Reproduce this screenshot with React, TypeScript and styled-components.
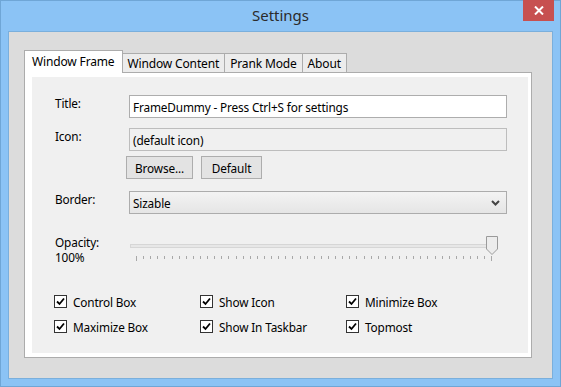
import React from "react";
import styled, { createGlobalStyle } from "styled-components";

const GlobalStyle = createGlobalStyle`
  html, body {
    margin: 0;
    padding: 0;
    background: #8bc3f5;
  }
  body {
    font-family: "Segoe UI", "Noto Sans", "Open Sans", sans-serif;
    font-size: 11.5px;
    letter-spacing: -0.15px;
    color: #000;
  }
`;

const Window = styled.div`
  width: 561px;
  height: 387px;
  box-sizing: border-box;
  background: #8bc3f5;
  border: 1px solid #6fa6d6;
  display: flex;
  flex-direction: column;
`;

const TitleBar = styled.div`
  position: relative;
  height: 30px;
  display: flex;
  align-items: center;
  justify-content: center;
`;

const Caption = styled.div`
  font-size: 15px;
  letter-spacing: 0;
  color: #2b2b2b;
  margin-top: -2px;
`;

const CloseButton = styled.div`
  position: absolute;
  top: -1px;
  right: 6px;
  width: 31px;
  height: 21px;
  background: #c75050;
  display: flex;
  align-items: center;
  justify-content: center;
`;

const Client = styled.div`
  flex: 1;
  margin: 0 7px 7px;
  background: #dcdcdc;
  border: 1px solid #7aafdc;
  padding: 18px 20px 20px 15px;
  display: flex;
  flex-direction: column;
`;

const TabStrip = styled.div`
  display: flex;
  align-items: flex-end;
  height: 23px;
  position: relative;
  z-index: 1;
  margin-bottom: -1px;
`;

const Tab = styled.div<{ $active?: boolean }>`
  box-sizing: border-box;
  height: ${(p) => (p.$active ? "23px" : "20px")};
  padding: ${(p) => (p.$active ? "0 7px 2px" : "0 5px")};
  margin-left: ${(p) => (p.$active ? "0" : "-1px")};
  background: ${(p) => (p.$active ? "#ffffff" : "#ececec")};
  border: 1px solid #acacac;
  border-bottom: ${(p) => (p.$active ? "none" : "1px solid #acacac")};
  display: flex;
  align-items: center;
  white-space: nowrap;
  font-size: 12px;
`;

const Panel = styled.div`
  flex: 1;
  background: #ffffff;
  border: 1px solid #acacac;
  padding: 4px 3px 4px 7px;
  display: flex;
`;

const Page = styled.div`
  flex: 1;
  background: #f0f0f0;
  padding: 18px 21px 0 23px;
  display: flex;
  flex-direction: column;
`;

const Row = styled.div<{ $top: number }>`
  display: flex;
  margin-top: ${(p) => p.$top}px;
`;

const Label = styled.div`
  width: 74px;
  flex-shrink: 0;
  line-height: 15px;
  padding-top: 1px;
  font-size: 11.8px;
`;

const TextBox = styled.div<{ $disabled?: boolean }>`
  flex: 1;
  box-sizing: border-box;
  height: 23px;
  background: ${(p) => (p.$disabled ? "#f0f0f0" : "#ffffff")};
  border: 1px solid ${(p) => (p.$disabled ? "#bdbdbd" : "#adadad")};
  padding: 0 3px;
  display: flex;
  align-items: center;
  font-size: 11.8px;
`;

const ButtonRow = styled.div`
  display: flex;
  gap: 8px;
  margin-left: 71px;
  margin-top: 5px;
`;

const Button = styled.div<{ $w: number }>`
  box-sizing: border-box;
  width: ${(p) => p.$w}px;
  height: 23px;
  background: #e3e3e3;
  border: 1px solid #adadad;
  display: flex;
  align-items: center;
  justify-content: center;
  font-size: 11.8px;
`;

const Combo = styled.div`
  flex: 1;
  box-sizing: border-box;
  height: 23px;
  background: linear-gradient(#f3f3f3, #e5e5e5);
  border: 1px solid #acacac;
  padding: 0 6px 0 3px;
  display: flex;
  align-items: center;
  justify-content: space-between;
  font-size: 11.8px;
`;

const SliderBox = styled.div`
  flex: 1;
  display: flex;
  flex-direction: column;
  padding: 2px 10px 0 1px;
`;

const TrackArea = styled.div`
  position: relative;
  height: 20px;
  display: flex;
  align-items: center;
`;

const Track = styled.div`
  flex: 1;
  height: 4px;
  box-sizing: border-box;
  background: #e7e7e7;
  border: 1px solid #d6d6d6;
`;

const Thumb = styled.svg`
  position: absolute;
  right: -1px;
  top: 0;
`;

const Ticks = styled.div`
  display: flex;
  justify-content: space-between;
  align-items: flex-start;
  padding: 0 4px 0 6px;
  height: 6px;
`;

const Tick = styled.div<{ $long?: boolean }>`
  width: 1px;
  height: ${(p) => (p.$long ? "5px" : "3px")};
  background: #a8a8a8;
`;

const Checks = styled.div`
  display: grid;
  grid-template-columns: repeat(3, 146px);
  row-gap: 10px;
  margin-top: 29px;
  margin-left: -1px;
`;

const Check = styled.div`
  display: flex;
  align-items: center;
  gap: 6px;
  height: 15px;
  font-size: 11.8px;
`;

const Box = styled.div`
  width: 13px;
  height: 13px;
  box-sizing: border-box;
  border: 1px solid #333;
  background: #fff;
  display: flex;
  align-items: center;
  justify-content: center;
`;

const CheckBox = ({ label }: { label: string }) => (
  <Check>
    <Box>
      <svg width="9" height="9" viewBox="0 0 9 9">
        <path d="M1 4.5 L3.5 7 L8 1.5" fill="none" stroke="#000" strokeWidth="1.8" />
      </svg>
    </Box>
    {label}
  </Check>
);

const tabs = ["Window Frame", "Window Content", "Prank Mode", "About"];
const checks = [
  "Control Box",
  "Show Icon",
  "Minimize Box",
  "Maximize Box",
  "Show In Taskbar",
  "Topmost",
];

export default function App() {
  const ticks = Array.from({ length: 51 }, (_, i) => i);
  return (
    <>
      <GlobalStyle />
      <Window>
        <TitleBar>
          <Caption>Settings</Caption>
          <CloseButton>
            <svg width="10" height="9" viewBox="0 0 10 9">
              <path d="M1 0.5 L9 8.5 M9 0.5 L1 8.5" stroke="#fff" strokeWidth="2" />
            </svg>
          </CloseButton>
        </TitleBar>
        <Client>
          <TabStrip>
            {tabs.map((t, i) => (
              <Tab key={t} $active={i === 0}>
                {t}
              </Tab>
            ))}
          </TabStrip>
          <Panel>
            <Page>
              <Row $top={0}>
                <Label>Title:</Label>
                <TextBox>FrameDummy - Press Ctrl+S for settings</TextBox>
              </Row>
              <Row $top={10}>
                <Label>Icon:</Label>
                <TextBox $disabled>(default icon)</TextBox>
              </Row>
              <ButtonRow>
                <Button $w={67}>Browse...</Button>
                <Button $w={61}>Default</Button>
              </ButtonRow>
              <Row $top={12}>
                <Label>Border:</Label>
                <Combo>
                  Sizable
                  <svg width="9" height="6" viewBox="0 0 9 6">
                    <path d="M1 1 L4.5 4.5 L8 1" fill="none" stroke="#444" strokeWidth="2" />
                  </svg>
                </Combo>
              </Row>
              <Row $top={20}>
                <Label>
                  Opacity:
                  <br />
                  100%
                </Label>
                <SliderBox>
                  <TrackArea>
                    <Track />
                    <Thumb width="12" height="19" viewBox="0 0 12 19">
                      <path
                        d="M0.5 0.5 H11.5 V13 L6 18.5 L0.5 13 Z"
                        fill="#ececec"
                        stroke="#9a9a9a"
                      />
                    </Thumb>
                  </TrackArea>
                  <Ticks>
                    {ticks.map((i) => (
                      <Tick key={i} $long={i === 0 || i === 50} />
                    ))}
                  </Ticks>
                </SliderBox>
              </Row>
              <Checks>
                {checks.map((c) => (
                  <CheckBox key={c} label={c} />
                ))}
              </Checks>
            </Page>
          </Panel>
        </Client>
      </Window>
    </>
  );
}
